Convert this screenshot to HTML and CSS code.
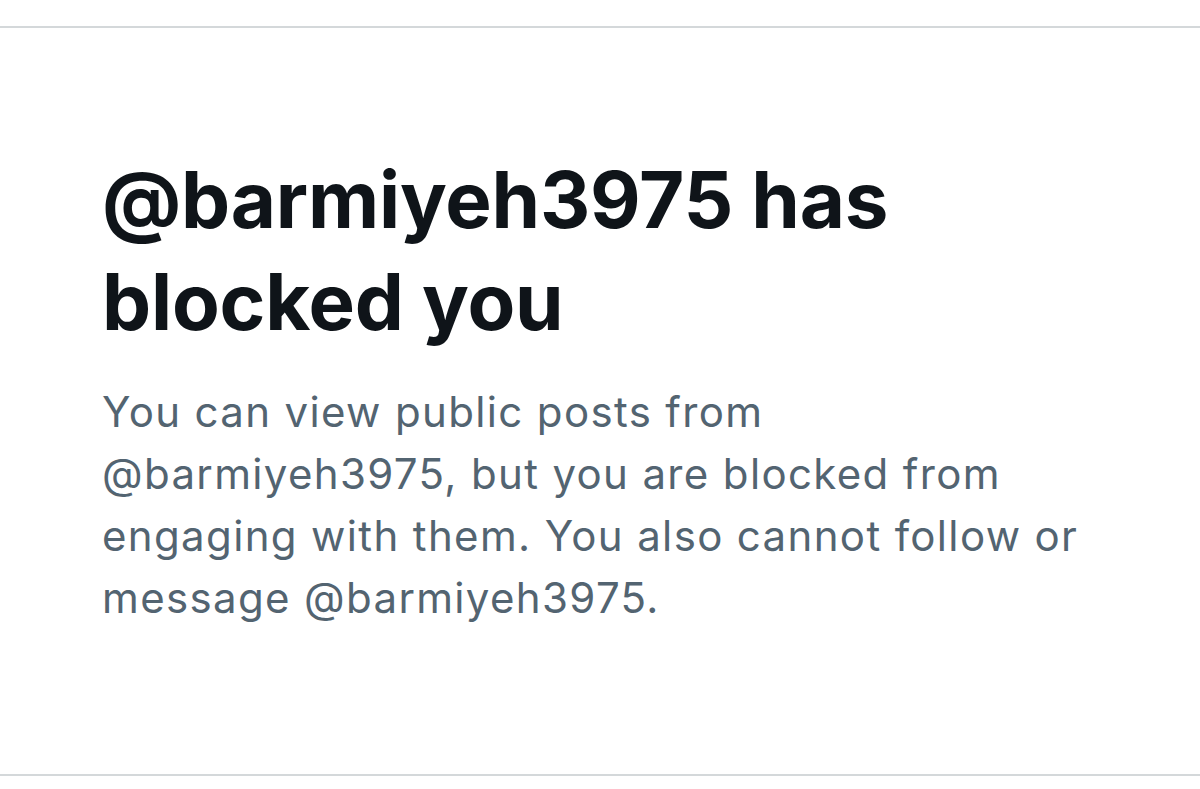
FILE: index.html
```html
<!DOCTYPE html>
<html lang="en">
<head>
<meta charset="utf-8">
<title>Blocked</title>
<link rel="stylesheet" href="styles.css">
</head>
<body>
<main class="panel">
  <section class="empty-state">
    <h1 class="title">@barmiyeh3975 has blocked you</h1>
    <p class="subtitle">You can view public posts from @barmiyeh3975, but you are blocked from engaging with them. You also cannot follow or message @barmiyeh3975.</p>
  </section>
</main>
</body>
</html>
```
FILE: styles.css
```css
html, body {
  margin: 0;
  padding: 0;
  background: #ffffff;
}
body {
  font-family: Inter, "Noto Sans", sans-serif;
  padding-top: 26px;
}
.panel {
  border-top: 2px solid #d4d8da;
  border-bottom: 2px solid #d4d8da;
  height: 750px;
  box-sizing: border-box;
}
.empty-state {
  padding: 121px 0 0 102px;
  max-width: 1000px;
}
.title {
  margin: 0;
  font-size: 78px;
  line-height: 102px;
  font-weight: 700;
  color: #0f1419;
  letter-spacing: -0.2px;
}
.subtitle {
  margin: 28px 0 0;
  font-size: 42px;
  line-height: 62px;
  font-weight: 400;
  color: #536471;
  letter-spacing: 1.35px;
}
```
